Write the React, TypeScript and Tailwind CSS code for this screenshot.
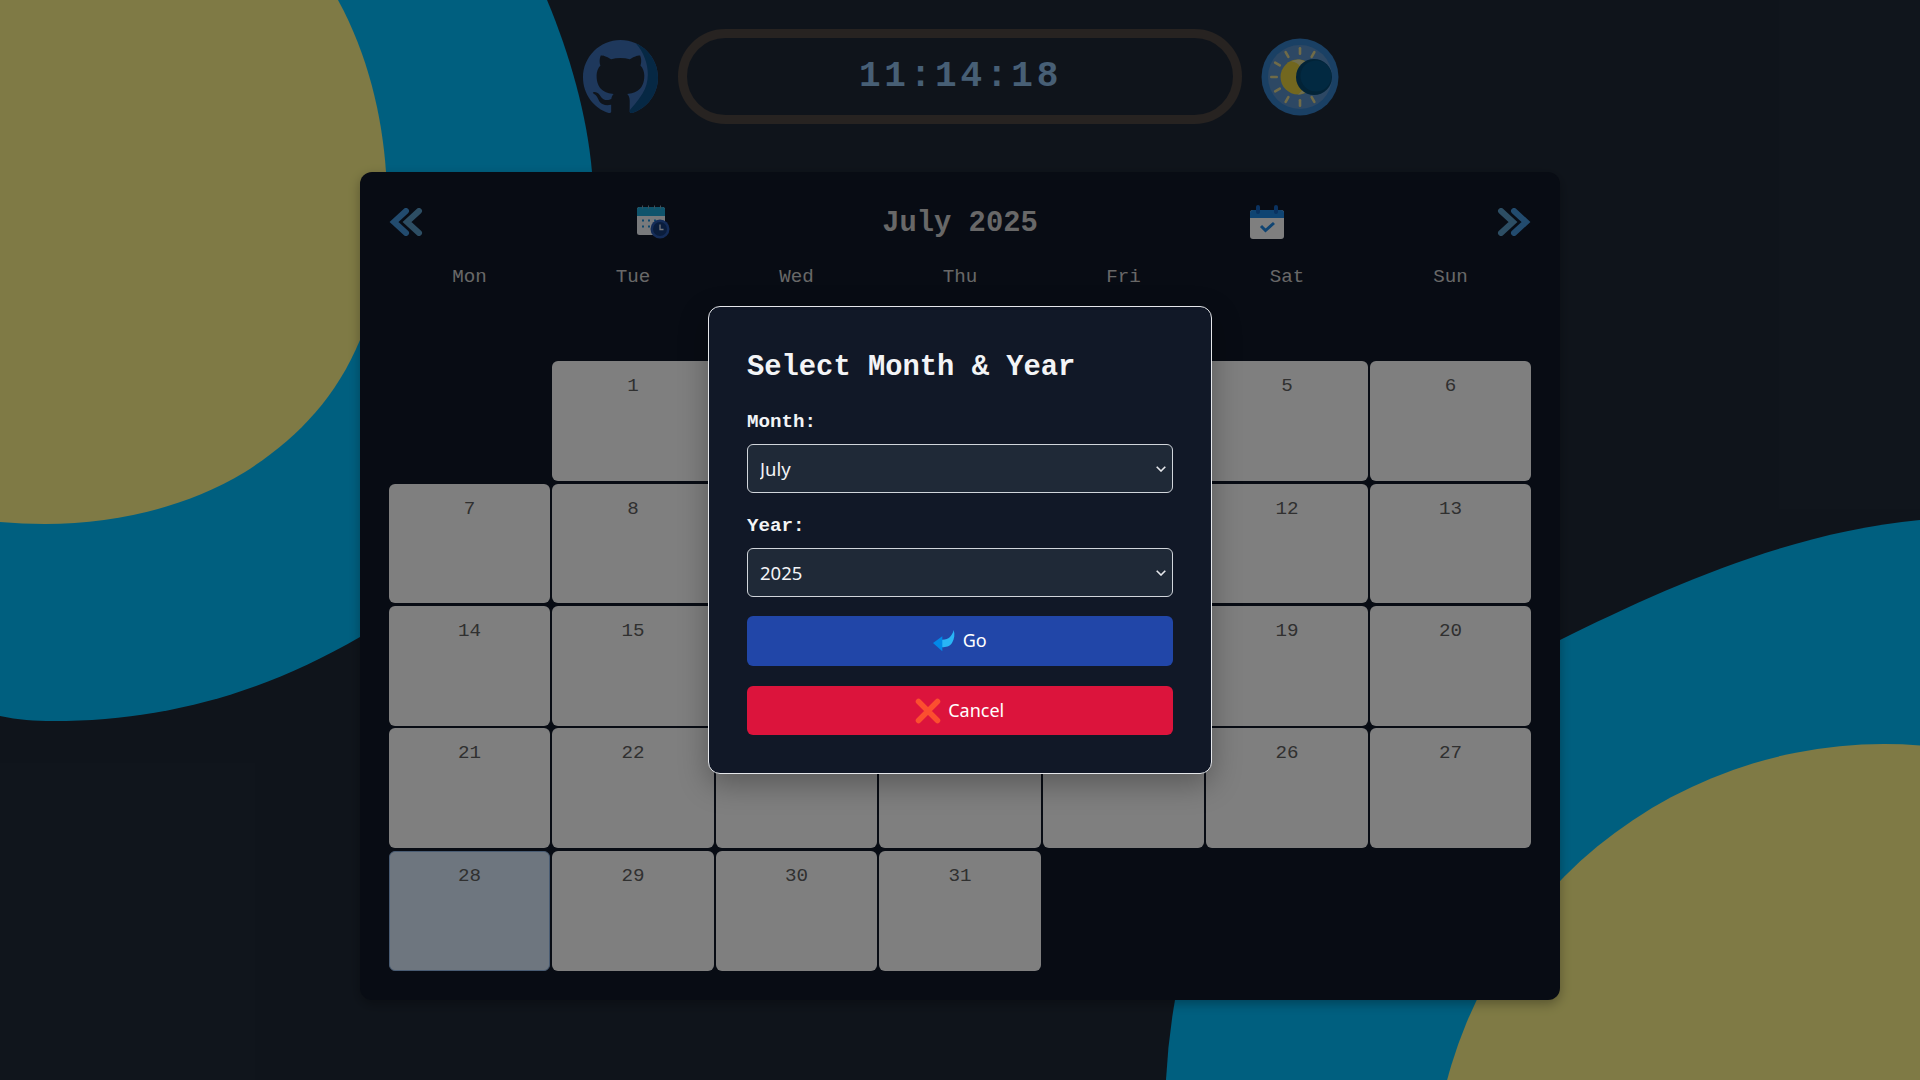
import React from "react";

const WEEKDAYS = ["Mon", "Tue", "Wed", "Thu", "Fri", "Sat", "Sun"];
const DAYS = Array.from({ length: 31 }, (_, i) => i + 1);
const MONTHS = ["January","February","March","April","May","June","July","August","September","October","November","December"];

function Backdrop() {
  return (
    <svg className="absolute inset-0" width="1920" height="1080" viewBox="0 0 1920 1080">
      <path d="M0 0L547 0C570 55 587 115 592 172L500 500L360 637C260 695 160 721 53 721C35 721 18 720 0 716Z" fill="#00bfff" />
      <path d="M0 0L338 0C368 55 382 115 386 172C389 230 380 290 360 340C335 400 295 440 245 472C185 508 115 524 45 524C30 524 15 523 0 522Z" fill="#fef58a" />
      <path d="M1920 520C1790 532 1665 588 1560 640L1300 800L1175 1000Q1168 1040 1166 1080L1920 1080Z" fill="#00bfff" />
      <circle cx="1884" cy="1196" r="452" fill="#fef58a" />
    </svg>
  );
}

function GithubIcon() {
  return (
    <svg width="75" height="75" viewBox="0 0 24 24" className="shrink-0 mr-[1px]">
      <defs>
        <clipPath id="ghc">
          <path d="M12 .297c-6.63 0-12 5.373-12 12 0 5.303 3.438 9.8 8.205 11.385.6.113.82-.258.82-.577 0-.285-.01-1.04-.015-2.04-3.338.724-4.042-1.61-4.042-1.61C4.422 18.07 3.633 17.7 3.633 17.7c-1.087-.744.084-.729.084-.729 1.205.084 1.838 1.236 1.838 1.236 1.07 1.835 2.809 1.305 3.495.998.108-.776.417-1.305.76-1.605-2.665-.3-5.466-1.332-5.466-5.93 0-1.31.465-2.38 1.235-3.22-.135-.303-.54-1.523.105-3.176 0 0 1.005-.322 3.3 1.23.96-.267 1.98-.399 3-.405 1.02.006 2.04.138 3 .405 2.28-1.552 3.285-1.23 3.285-1.23.645 1.653.24 2.873.12 3.176.765.84 1.23 1.91 1.23 3.22 0 4.61-2.805 5.625-5.475 5.92.42.36.81 1.096.81 2.22 0 1.606-.015 2.896-.015 3.286 0 .315.21.69.825.57C20.565 22.092 24 17.592 24 12.297c0-6.627-5.373-12-12-12" />
        </clipPath>
      </defs>
      <g clipPath="url(#ghc)">
        <rect width="24" height="24" fill="#3c70b8" />
        <path d="M17 1.5C21 6 22 13 19 17.5C17.5 20 15.5 22 14 24H24V0H17Z" fill="#0c5088" />
      </g>
    </svg>
  );
}

function SunMoonIcon() {
  return (
    <svg width="78" height="78" viewBox="0 0 78 78" className="shrink-0">
      <circle cx="39" cy="39" r="38.5" fill="#3480c8" />
      <circle cx="39" cy="39" r="32" fill="#5a90c8" />
      {[0, 30, 150, 180, 210, 240, 270, 300, 330].map((a) => (
        <rect key={a} x="37.7" y="9" width="2.6" height="8" rx="1.3" fill="#e0d690" transform={`rotate(${a} 39 39)`} />
      ))}
      <circle cx="37" cy="39" r="17.5" fill="#e4cf3e" />
      <path d="M37 21.5C44 21.5 54 29 54 39C54 49 44 56.5 37 56.5C43 52 45 46 43 39C41 30 39 25 30 23Z" fill="#e0dca0" />
      <circle cx="53" cy="39" r="18" fill="#04466e" />
      <circle cx="55" cy="38" r="15.5" fill="#055282" />
    </svg>
  );
}

function ChevronsLeft() {
  return (
    <svg width="34" height="28" viewBox="0 0 34 28" className="shrink-0">
      <polyline points="17,3 5,14 17,25" fill="none" stroke="#4496dc" strokeWidth="6" strokeLinecap="round" strokeLinejoin="miter" />
      <polyline points="30,3 18,14 30,25" fill="none" stroke="#5a9cc8" strokeWidth="6" strokeLinecap="round" strokeLinejoin="miter" />
    </svg>
  );
}

function ChevronsRight() {
  return (
    <svg width="34" height="28" viewBox="0 0 34 28" className="shrink-0">
      <polyline points="4,3 16,14 4,25" fill="none" stroke="#5a9cc8" strokeWidth="6" strokeLinecap="round" strokeLinejoin="miter" />
      <polyline points="17,3 29,14 17,25" fill="none" stroke="#4496dc" strokeWidth="6" strokeLinecap="round" strokeLinejoin="miter" />
    </svg>
  );
}

function CalendarClockIcon() {
  return (
    <svg width="34" height="34" viewBox="0 0 34 34" className="shrink-0">
      <rect x="1" y="2" width="28" height="28" rx="2.5" fill="#f0f4f8" />
      <path d="M1 11V4.5A2.5 2.5 0 0 1 3.5 2H26.5A2.5 2.5 0 0 1 29 4.5V11Z" fill="#1ea8d8" />
      {[6, 12, 18, 24].map((x) => (
        <rect key={x} x={x} y="0.5" width="1" height="3" fill="#80a0b0" />
      ))}
      {[6, 12, 18].map((x) => (
        <g key={x}>
          <rect x={x} y="14.5" width="2" height="2" fill="#1e90d8" />
          <rect x={x} y="20.5" width="2" height="2" fill="#1e90d8" />
        </g>
      ))}
      <circle cx="24" cy="24" r="9.5" fill="#2858b0" />
      <circle cx="24" cy="24" r="7" fill="#143a78" />
      <path d="M24 19.5V24.5H27.5" fill="none" stroke="#e8eef8" strokeWidth="1.3" />
    </svg>
  );
}

function CalendarCheckIcon() {
  return (
    <svg width="34" height="34" viewBox="0 0 34 34" className="shrink-0">
      <rect x="0" y="5" width="34" height="29" rx="3" fill="#fff" />
      <path d="M0 13V8A3 3 0 0 1 3 5H31A3 3 0 0 1 34 8V13Z" fill="#1e88e5" />
      <rect x="6" y="0" width="4" height="9" rx="2" fill="#1565c0" />
      <rect x="24" y="0" width="4" height="9" rx="2" fill="#1565c0" />
      <path d="M11 21L15.5 25.5L24 18" fill="none" stroke="#1e88e5" strokeWidth="3" />
    </svg>
  );
}

function GoIcon() {
  return (
    <svg width="22" height="22" viewBox="0 0 22 22" className="shrink-0">
      <path d="M9 9.7C13 9.7 15 8.8 16.7 7.3C18.5 5.5 20 3 20.7 0C22 4 21.5 9 19 13C16.5 16.5 13 17.3 9 17.3Z" fill="#29b6f6" />
      <path d="M0 13L9.3 6.3V21.3Z" fill="#0288e8" />
    </svg>
  );
}

function CancelIcon() {
  return (
    <svg width="26" height="26" viewBox="0 0 26 26" className="shrink-0">
      <path d="M3.5 3.5L22.5 22.5M22.5 3.5L3.5 22.5" stroke="#fb4f2f" strokeWidth="5.5" strokeLinecap="round" />
    </svg>
  );
}

function Field({ label, value, options, className }: { label: string; value: string; options: string[]; className: string }) {
  return (
    <div className={className}>
      <label className="block font-['Liberation_Mono',monospace] text-[19.2px] leading-[22px] font-bold text-[#f3f4f6] mb-[11px]">{label}</label>
      <div className="relative">
        <select
          defaultValue={value}
          className="block w-full h-[49px] appearance-none rounded-[6px] border border-[#d1d5db] bg-[#1f2937] pl-[12px] font-['Noto_Sans',sans-serif] text-[18.5px] text-[#f3f4f6]"
        >
          {options.map((o) => (
            <option key={o}>{o}</option>
          ))}
        </select>
        <svg width="10" height="6" viewBox="0 0 10 6" className="absolute right-[7px] top-[22px] pointer-events-none">
          <polyline points="0.7,0.7 5,5 9.3,0.7" fill="none" stroke="#e5e7eb" strokeWidth="1.6" />
        </svg>
      </div>
    </div>
  );
}

export default function App() {
  return (
    <div className="relative w-[1920px] h-[1080px] overflow-hidden bg-[#1f2937] font-['Liberation_Mono',monospace]">
      <Backdrop />
      <div className="relative flex flex-col items-center pt-[29px]">
        <header className="flex items-center gap-[19px] pl-[2px]">
          <GithubIcon />
          <div className="flex items-center justify-center w-[564px] h-[95px] rounded-full border-[9px] border-[#4e4642]">
            <span className="pl-[1px] text-[36px] font-bold tracking-[3.8px] text-[#8fbfea] font-['Liberation_Mono',monospace]">11:14:18</span>
          </div>
          <SunMoonIcon />
        </header>

        <main className="mt-[48px] w-[1200px] h-[828px] rounded-[12px] bg-[#101828] px-[29px] pt-[30px] shadow-[0_4px_12px_rgba(0,0,0,0.3)]">
          <div className="flex items-center justify-between h-[40px]">
            <ChevronsLeft />
            <CalendarClockIcon />
            <h1 className="text-[28.8px] leading-[40px] pt-[4px] font-bold text-[#d0d0d0]">July 2025</h1>
            <CalendarCheckIcon />
            <ChevronsRight />
          </div>
          <div className="grid grid-cols-7 gap-x-[2.4px] mt-[24px]">
            {WEEKDAYS.map((d) => (
              <div key={d} className="text-center text-[19.2px] leading-[22px] text-[#d0d0d0]">{d}</div>
            ))}
          </div>
          <div className="grid grid-cols-7 gap-x-[2.4px] gap-y-[2.55px] auto-rows-[119.9px] mt-[73.1px]">
            <div />
            {DAYS.map((n) => (
              <div
                key={n}
                className={`rounded-[6px] text-center text-[19.2px] leading-[24px] text-[#606060] ${n === 28 ? "pt-[12px] bg-[#dcedff] border border-[#93b8e6]" : "pt-[13px] bg-white"}`}
              >
                {n}
              </div>
            ))}
          </div>
        </main>
      </div>

      <div className="absolute inset-0 flex items-center justify-center bg-black/50">
        <div className="w-[504px] h-[468px] rounded-[12px] border border-[#e5e7eb] bg-[#111827] pl-[38px] pr-[38.5px] pt-[39px] shadow-[0_10px_30px_rgba(0,0,0,0.3)]">
          <h2 className="text-[28.8px] leading-[44px] font-bold text-[#f3f4f6]">Select Month &amp; Year</h2>
          <Field className="mt-[21px]" label="Month:" value="July" options={MONTHS} />
          <Field className="mt-[22px]" label="Year:" value="2025" options={["2023", "2024", "2025", "2026", "2027"]} />
          <button className="mt-[19px] flex w-full h-[50px] items-center justify-center gap-[8px] rounded-[6px] bg-[#2146a8] pb-[1px] font-['Noto_Sans',sans-serif] text-[18px] text-white">
            <GoIcon />
            <span>Go</span>
          </button>
          <button className="mt-[20px] flex w-full h-[49px] items-center justify-center gap-[7px] rounded-[6px] bg-[#dc143c] font-['Noto_Sans',sans-serif] text-[18px] text-white">
            <CancelIcon />
            <span>Cancel</span>
          </button>
        </div>
      </div>
    </div>
  );
}
